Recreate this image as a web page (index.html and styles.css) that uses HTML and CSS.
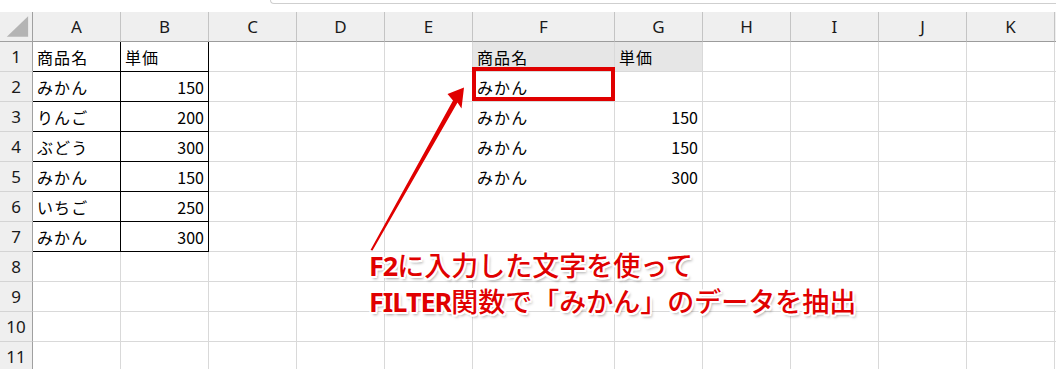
FILE: index.html
```html
<!DOCTYPE html>
<html lang="ja">
<head>
<meta charset="utf-8">
<link rel="stylesheet" href="styles.css">
</head>
<body>
<div class="page">
  <div class="topstrip"><div class="fbar"></div></div>
  <div class="sheet">
    <div class="corner"><svg width="33" height="29" viewBox="0 0 33 29"><polygon points="7,25 29,4 29,25" fill="#b4b4b4"/></svg></div>
    <div class="ch">A</div><div class="ch">B</div><div class="ch">C</div><div class="ch">D</div><div class="ch">E</div><div class="ch">F</div><div class="ch">G</div><div class="ch">H</div><div class="ch">I</div><div class="ch">J</div><div class="ch">K</div><div class="ch end"></div>

    <div class="rh">1</div>
    <div class="c t jp">商品名</div><div class="c t jp">単価</div><div class="c"></div><div class="c"></div><div class="c"></div><div class="c hl jp">商品名</div><div class="c hl jp">単価</div><div class="c"></div><div class="c"></div><div class="c"></div><div class="c"></div><div class="c"></div>

    <div class="rh">2</div>
    <div class="c t jp">みかん</div><div class="c t num">150</div><div class="c"></div><div class="c"></div><div class="c"></div><div class="c jp">みかん</div><div class="c"></div><div class="c"></div><div class="c"></div><div class="c"></div><div class="c"></div><div class="c"></div>

    <div class="rh">3</div>
    <div class="c t jp">りんご</div><div class="c t num">200</div><div class="c"></div><div class="c"></div><div class="c"></div><div class="c jp">みかん</div><div class="c num">150</div><div class="c"></div><div class="c"></div><div class="c"></div><div class="c"></div><div class="c"></div>

    <div class="rh">4</div>
    <div class="c t jp">ぶどう</div><div class="c t num">300</div><div class="c"></div><div class="c"></div><div class="c"></div><div class="c jp">みかん</div><div class="c num">150</div><div class="c"></div><div class="c"></div><div class="c"></div><div class="c"></div><div class="c"></div>

    <div class="rh">5</div>
    <div class="c t jp">みかん</div><div class="c t num">150</div><div class="c"></div><div class="c"></div><div class="c"></div><div class="c jp">みかん</div><div class="c num">300</div><div class="c"></div><div class="c"></div><div class="c"></div><div class="c"></div><div class="c"></div>

    <div class="rh">6</div>
    <div class="c t jp">いちご</div><div class="c t num">250</div><div class="c"></div><div class="c"></div><div class="c"></div><div class="c"></div><div class="c"></div><div class="c"></div><div class="c"></div><div class="c"></div><div class="c"></div><div class="c"></div>

    <div class="rh">7</div>
    <div class="c t jp">みかん</div><div class="c t num">300</div><div class="c"></div><div class="c"></div><div class="c"></div><div class="c"></div><div class="c"></div><div class="c"></div><div class="c"></div><div class="c"></div><div class="c"></div><div class="c"></div>

    <div class="rh">8</div>
    <div class="c"></div><div class="c"></div><div class="c"></div><div class="c"></div><div class="c"></div><div class="c"></div><div class="c"></div><div class="c"></div><div class="c"></div><div class="c"></div><div class="c"></div><div class="c"></div>

    <div class="rh">9</div>
    <div class="c"></div><div class="c"></div><div class="c"></div><div class="c"></div><div class="c"></div><div class="c"></div><div class="c"></div><div class="c"></div><div class="c"></div><div class="c"></div><div class="c"></div><div class="c"></div>

    <div class="rh">10</div>
    <div class="c"></div><div class="c"></div><div class="c"></div><div class="c"></div><div class="c"></div><div class="c"></div><div class="c"></div><div class="c"></div><div class="c"></div><div class="c"></div><div class="c"></div><div class="c"></div>

    <div class="rh">11</div>
    <div class="c"></div><div class="c"></div><div class="c"></div><div class="c"></div><div class="c"></div><div class="c"></div><div class="c"></div><div class="c"></div><div class="c"></div><div class="c"></div><div class="c"></div><div class="c"></div>
  </div>

  <div class="redbox"></div>
  <svg class="arrow" width="1056" height="369" viewBox="0 0 1056 369">
    <polygon points="370.5,250 453,100.5 447.5,94 464,87.5 461.5,108.5 457.5,102.5 372.5,250.5" fill="#e00000"/>
  </svg>
  <div class="note">
    <div class="line"><span class="lat">F2</span>に入力した文字を使って</div>
    <div class="line"><span class="lat">FILTER</span>関数で「みかん」のデータを抽出</div>
  </div>
</div>
</body>
</html>
```

FILE: styles.css
```css
* { box-sizing: border-box; }
html, body {
  margin: 0;
  padding: 0;
  background: #fff;
}
body {
  width: 1056px;
  height: 369px;
  overflow: hidden;
  font-family: "Noto Sans CJK JP", "Noto Sans", sans-serif;
  color: #000;
}
.page {
  position: relative;
  width: 1056px;
  height: 369px;
  overflow: hidden;
}
.topstrip {
  height: 12px;
  background: #fff;
}
.fbar {
  margin-left: 270px;
  height: 4px;
  border-left: 1px solid #cfcfcf;
  border-bottom: 1px solid #cfcfcf;
  border-bottom-left-radius: 4px;
}
.sheet {
  display: grid;
  grid-template-columns: 33px 88px 88px 88px 88px 88px 142px 88px 88px 88px 88px 88px 20px;
  grid-auto-rows: 30px;
}
.corner {
  background: #efefef;
  border-right: 1px solid #a0a0a0;
  border-bottom: 1px solid #a0a0a0;
  display: flex;
  align-items: flex-start;
}
.corner svg { display: block; }
.ch {
  background: #efefef;
  border-right: 1px solid #c4c4c4;
  border-bottom: 1px solid #9c9c9c;
  display: flex;
  align-items: center;
  justify-content: center;
  font-family: "Noto Sans", "Noto Sans CJK JP", sans-serif;
  font-size: 17px;
  color: #1a1a1a;
  padding-bottom: 1px;
}
.rh {
  background: #efefef;
  border-right: 1px solid #a0a0a0;
  border-bottom: 1px solid #d4d4d4;
  display: flex;
  align-items: center;
  justify-content: center;
  font-family: "Noto Sans", "Noto Sans CJK JP", sans-serif;
  font-size: 17px;
  color: #1a1a1a;
}
.c {
  border-right: 1px solid #d9d9d9;
  border-bottom: 1px solid #d9d9d9;
  display: flex;
  align-items: center;
  padding: 0 4px;
  font-size: 16px;
  white-space: nowrap;
}
.jp { letter-spacing: 1.1px; padding-left: 4px; }
.num { justify-content: flex-end; padding-right: 4px; }
.t {
  border-right-color: #000;
  border-bottom-color: #000;
}
.hl { background: #e6e6e6; }
.redbox {
  position: absolute;
  left: 472px;
  top: 67px;
  width: 143px;
  height: 34px;
  border: 4px solid #e00000;
}
.arrow {
  position: absolute;
  left: 0;
  top: 0;
}
.note {
  position: absolute;
  left: 369px;
  top: 247px;
  font-family: "Noto Sans CJK JP", sans-serif;
  font-size: 27px;
  line-height: 35px;
  font-weight: 500;
  color: #e00000;
  white-space: nowrap;
  text-shadow:
    2px 0 0 #fff, -2px 0 0 #fff, 0 2px 0 #fff, 0 -2px 0 #fff,
    1.5px 1.5px 0 #fff, -1.5px -1.5px 0 #fff, 1.5px -1.5px 0 #fff, -1.5px 1.5px 0 #fff,
    2px 3px 3px rgba(0, 0, 0, 0.35);
}
.lat {
  font-family: "Noto Sans", sans-serif;
  font-weight: 700;
  letter-spacing: -1px;
}
```
